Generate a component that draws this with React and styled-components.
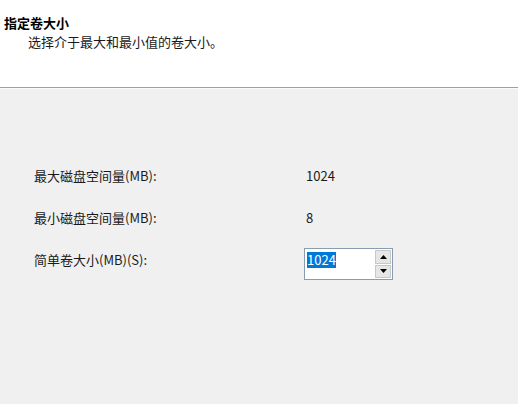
import React from "react";
import styled, { createGlobalStyle } from "styled-components";

const Global = createGlobalStyle`
  html, body { margin: 0; padding: 0; background: #f0f0f0; }
  body { font-family: "Noto Sans CJK SC", "Noto Sans", sans-serif; font-size: 13px; color: #000; }
  #root { width: 518px; height: 404px; overflow: hidden; }
`;

const Page = styled.div`
  width: 518px;
  height: 404px;
  display: flex;
  flex-direction: column;
  background: #f0f0f0;
`;

const Header = styled.header`
  height: 88px;
  flex: none;
  box-sizing: border-box;
  padding: 13px 0 0 4px;
  background: #ffffff;
  border-bottom: 1px solid #a0a0a0;
  box-shadow: 0 1px 0 #fafafa;
  line-height: 19px;
`;

const Title = styled.div`
  font-weight: bold;
`;

const Subtitle = styled.div`
  padding-left: 24px;
  color: #1a1a1a;
`;

const Body = styled.main`
  flex: 1;
  padding: 80px 0 0 34px;
`;

const Form = styled.div`
  display: grid;
  grid-template-columns: 270px auto;
  row-gap: 26px;
  align-items: start;
  line-height: 16px;
`;

const Label = styled.div`
  color: #1a1a1a;
`;

const Value = styled.div`
  padding-left: 2px;
  color: #1a1a1a;
`;

const SpinBox = styled.div`
  margin-top: -4px;
  width: 89px;
  height: 32px;
  box-sizing: border-box;
  border: 1px solid #8a9cb2;
  background: #ffffff;
  display: flex;
`;

const Field = styled.div`
  flex: 1;
  padding: 3px 0 0 2px;
`;

const Selected = styled.span`
  display: inline-block;
  background: #0078d7;
  color: #ffffff;
  line-height: 16px;
`;

const Spinner = styled.div`
  width: 16px;
  margin: 1px 1px 1px 0;
  display: flex;
  flex-direction: column;
  gap: 1px;
`;

const SpinButton = styled.div`
  flex: 1;
  background: #e6e6e6;
  border: 1px solid #c8c8c8;
  display: flex;
  align-items: center;
  justify-content: center;
`;

const Arrow = ({ up }) => (
  <svg width="7" height="4" viewBox="0 0 7 4">
    {up ? <path d="M3.5 0L7 4H0Z" fill="#000" /> : <path d="M0 0H7L3.5 4Z" fill="#000" />}
  </svg>
);

export default function App() {
  return (
    <Page>
      <Global />
      <Header>
        <Title>指定卷大小</Title>
        <Subtitle>选择介于最大和最小值的卷大小。</Subtitle>
      </Header>
      <Body>
        <Form>
          <Label>最大磁盘空间量(MB):</Label>
          <Value>1024</Value>
          <Label>最小磁盘空间量(MB):</Label>
          <Value>8</Value>
          <Label>简单卷大小(MB)(S):</Label>
          <SpinBox>
            <Field>
              <Selected>1024</Selected>
            </Field>
            <Spinner>
              <SpinButton><Arrow up /></SpinButton>
              <SpinButton><Arrow /></SpinButton>
            </Spinner>
          </SpinBox>
        </Form>
      </Body>
    </Page>
  );
}
